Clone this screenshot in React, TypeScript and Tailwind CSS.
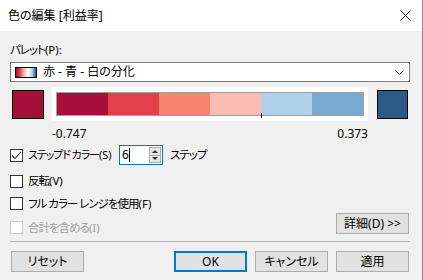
import React from "react";

const font = "font-['Noto_Sans','Noto_Sans_CJK_JP',sans-serif] [font-feature-settings:'palt'] whitespace-nowrap";
const lbl = "ml-[5px] leading-[16px] text-[11.5px] tracking-[-1px]";

function M({ children }: { children: React.ReactNode }) {
  return <span className="tracking-normal">{children}</span>;
}

function Box({ checked, disabled }: { checked?: boolean; disabled?: boolean }) {
  return (
    <div
      className={`w-[13px] h-[13px] shrink-0 border bg-white flex items-center justify-center ${
        disabled ? "border-[#cccccc]" : "border-[#333333]"
      }`}
    >
      {checked && (
        <svg width="11" height="11" viewBox="0 0 11 11">
          <polyline points="1,5.5 4,8.5 10,2" fill="none" stroke="#333" strokeWidth="1.1" />
        </svg>
      )}
    </div>
  );
}

function Btn({ children, primary, className = "" }: { children: React.ReactNode; primary?: boolean; className?: string }) {
  return (
    <div
      className={`w-[73px] h-[21px] flex items-center justify-center bg-[#e1e1e1] text-[12px] text-black ${
        primary ? "border-2 border-[#0078d7]" : "border border-[#adadad]"
      } ${className}`}
    >
      {children}
    </div>
  );
}

export default function App() {
  const segs = ["#a50f3a", "#e2404a", "#f8846f", "#fdbcb1", "#aed0e8", "#78aad0"];
  return (
    <div className={`w-[423px] h-[280px] bg-[#f0f0f0] border-r border-[#8a8a8a] flex flex-col text-[12px] text-black ${font}`}>
      {/* title bar */}
      <div className="h-[31px] shrink-0 bg-white flex items-center justify-between pl-[8px] pr-[11px]">
        <span className="text-[12px] leading-[16px]">色の編集 [利益率]</span>
        <svg width="11" height="11" viewBox="0 0 11 11">
          <path d="M0.5 0.5 L10.5 10.5 M10.5 0.5 L0.5 10.5" stroke="#111" strokeWidth="1" />
        </svg>
      </div>

      <div className="flex flex-col pl-[10px] pr-[13px]">
        <div className="mt-[11px] h-[16px] leading-[16px] text-[11.5px] tracking-[-1px]">
          パレット<M>(P):</M>
        </div>
        <div className="mt-[4px] h-[20px] mr-[-1px] bg-white border border-[#7a7a7a] flex items-center pl-[4px] pr-[4px]">
          <div className="w-[22px] h-[11px] border border-black bg-[linear-gradient(to_right,#a50f3a,#e2404a,#fdbcb1,#ffffff,#aed0e8,#2c5a87)]" />
          <span className="ml-[6px] leading-[16px]">赤 - 青 - 白の分化</span>
          <div className="flex-1" />
          <svg width="9" height="5" viewBox="0 0 9 5" className="mr-[1px]">
            <polyline points="0.5,0.5 4.5,4.5 8.5,0.5" fill="none" stroke="#444" strokeWidth="1" />
          </svg>
        </div>

        {/* color bar row */}
        <div className="mt-[5px] h-[34px] flex items-center">
          <div className="ml-[2px] w-[32px] h-[29px] border border-black bg-[#a50f3a]" />
          <div className="ml-[8px] w-[316px] h-[34px] bg-white px-[4px] py-[5px]">
            <div className="relative h-[24px] border border-[#a0a0a0] flex">
              {segs.map((c) => (
                <div key={c} className="flex-1 h-full" style={{ backgroundColor: c }} />
              ))}
              <div className="absolute left-[204px] top-[20px] w-px h-[5px] bg-black" />
            </div>
          </div>
          <div className="ml-[9px] w-[31px] h-[29px] border border-black bg-[#2c5a87]" />
        </div>

        <div className="mt-[5px] ml-[42px] w-[316px] h-[16px] leading-[16px] flex justify-between">
          <span>-0.747</span>
          <span>0.373</span>
        </div>

        {/* row 1 */}
        <div className="mt-[3px] h-[20px] flex items-center">
          <Box checked />
          <span className="ml-[5px] leading-[16px] text-[11px] tracking-[-1.1px] w-[91px] shrink-0">
            ステップド カラー<M>(S)</M>
          </span>
          <div className="w-[44px] shrink-0 h-[20px] border border-[#0078d7] bg-white flex items-center">
            <span className="ml-[2px] leading-[16px]">6</span>
            <span className="w-px h-[14px] bg-black" />
            <div className="flex-1" />
            <div className="w-[12px] h-[16px] mr-[1px] border border-[#adadad] bg-[#e6e6e6] flex flex-col">
              <div className="flex-1 flex items-center justify-center border-b border-[#adadad]">
                <svg width="6" height="3" viewBox="0 0 6 3"><polygon points="0,3 3,0 6,3" fill="#333" /></svg>
              </div>
              <div className="flex-1 flex items-center justify-center">
                <svg width="6" height="3" viewBox="0 0 6 3"><polygon points="0,0 6,0 3,3" fill="#333" /></svg>
              </div>
            </div>
          </div>
          <span className="ml-[7px] leading-[16px] text-[11.5px] tracking-[-1px]">ステップ</span>
        </div>

        {/* row 2 */}
        <div className="mt-[6px] h-[20px] flex items-center">
          <Box />
          <span className={lbl}>
            反転<M>(V)</M>
          </span>
        </div>

        {/* row 3 */}
        <div className="mt-[3px] h-[19px] flex items-center">
          <Box />
          <span className={lbl}>
            フル カラー レンジを使用<M>(F)</M>
          </span>
        </div>

        {/* row 4 */}
        <div className="h-[20px] flex items-start justify-between">
          <div className="mt-[8px] h-[13px] flex items-center">
            <Box disabled />
            <span className={`${lbl} text-[#a0a0a0]`}>
              合計を含める<M>(I)</M>
            </span>
          </div>
          <Btn>詳細(D) &gt;&gt;</Btn>
        </div>

        <div className="mt-[8px] h-px bg-[#b4b4b4] mr-[-1px]" />

        <div className="mt-[9px] h-[21px] flex items-center justify-between">
          <Btn className="ml-[1px]">リセット</Btn>
          <div className="flex gap-[8px]">
            <Btn primary>OK</Btn>
            <Btn>キャンセル</Btn>
            <Btn>適用</Btn>
          </div>
        </div>
      </div>
    </div>
  );
}
